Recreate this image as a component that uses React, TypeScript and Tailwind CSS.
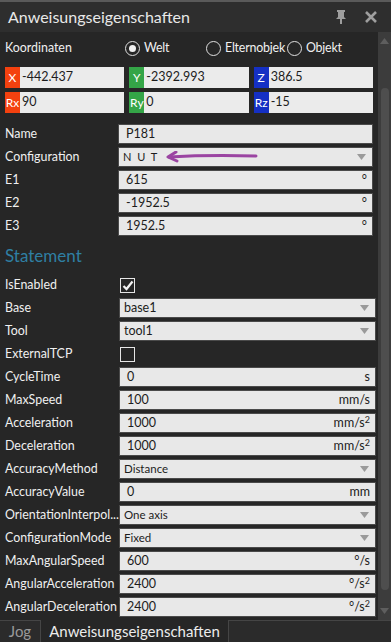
import React from 'react';

const font = { fontFamily: 'Lato, "Noto Sans", sans-serif' };

const Arrow = () => (
  <svg width="9" height="6" viewBox="0 0 9 6" className="shrink-0">
    <path d="M0 0 H9 L4.5 6 Z" fill="#9a9a9a" />
  </svg>
);

type Row = {
  label: string;
  kind: 'text' | 'select' | 'check';
  value?: string;
  unit?: React.ReactNode;
  checked?: boolean;
  small?: boolean;
};

const sq = <span className="text-[9px] inline-block -translate-y-[4px]">2</span>;

const statementRows: Row[] = [
  { label: 'IsEnabled', kind: 'check', checked: true },
  { label: 'Base', kind: 'select', value: 'base1' },
  { label: 'Tool', kind: 'select', value: 'tool1' },
  { label: 'ExternalTCP', kind: 'check', checked: false },
  { label: 'CycleTime', kind: 'text', value: '0', unit: 's' },
  { label: 'MaxSpeed', kind: 'text', value: '100', unit: 'mm/s' },
  { label: 'Acceleration', kind: 'text', value: '1000', unit: <>mm/s{sq}</> },
  { label: 'Deceleration', kind: 'text', value: '1000', unit: <>mm/s{sq}</> },
  { label: 'AccuracyMethod', kind: 'select', value: 'Distance', small: true },
  { label: 'AccuracyValue', kind: 'text', value: '0', unit: 'mm' },
  { label: 'OrientationInterpol...', kind: 'select', value: 'One axis', small: true },
  { label: 'ConfigurationMode', kind: 'select', value: 'Fixed', small: true },
  { label: 'MaxAngularSpeed', kind: 'text', value: '600', unit: '°/s' },
  { label: 'AngularAcceleration', kind: 'text', value: '2400', unit: <>°/s{sq}</> },
  { label: 'AngularDeceleration', kind: 'text', value: '2400', unit: <>°/s{sq}</> },
];

const Field: React.FC<{ row: Row }> = ({ row }) => {
  if (row.kind === 'check') {
    return (
      <div className="h-[20px] flex items-center pl-[1px]">
        <div className="w-[15px] h-[15px] border border-[#e6e6e6] bg-[#262626] flex items-center justify-center">
          {row.checked && (
            <svg width="12" height="11" viewBox="0 0 12 11">
              <path d="M1.5 6 L4.5 9 L10.5 1.5" stroke="#f2f2f2" strokeWidth="2.2" fill="none" />
            </svg>
          )}
        </div>
      </div>
    );
  }
  return (
    <div className="h-[20px] bg-[#e8e8e8] border border-[#4a4a4a] flex items-center text-[#1c1c1c]">
      <span className={`flex-1 ${row.kind === 'select' ? 'pl-[4px]' : 'pl-[7px]'} ${row.small ? 'text-[11.5px]' : 'text-[12.5px]'}`}>
        {row.value}
      </span>
      {row.kind === 'select' ? (
        <span className="pr-[6px] flex items-center"><Arrow /></span>
      ) : (
        <span className="pr-[5px] text-[12.5px] whitespace-nowrap">{row.unit}</span>
      )}
    </div>
  );
};

const Coord: React.FC<{ label: string; value: string; color: string }> = ({ label, value, color }) => (
  <div className="h-[21px] flex bg-[#ebebeb] text-[12.5px]">
    <div className={`w-[15px] flex items-center justify-center text-white text-[12px] ${color}`}>{label}</div>
    <div className="flex-1 flex items-center pl-[2px] text-[#1c1c1c]">{value}</div>
  </div>
);

const Radio: React.FC<{ on?: boolean; label: string }> = ({ on, label }) => (
  <div className="flex items-center gap-[4px]">
    <div className="w-[15px] h-[15px] shrink-0 rounded-full border border-[#e0e0e0] flex items-center justify-center">
      {on && <div className="w-[7px] h-[7px] rounded-full bg-[#f0f0f0]" />}
    </div>
    <span className="whitespace-nowrap tracking-[-0.2px]">{label}</span>
  </div>
);

export default function App() {
  return (
    <div className="w-[391px] h-[642px] bg-[#262626] text-[#f0f0f0] flex flex-col overflow-hidden" style={font}>
      <div className="h-[2px] bg-[#5a5a5a]" />
      <div className="h-[30px] bg-[#2e2e2e] flex items-center pl-[8px] pr-[14px]">
        <span className="flex-1 text-[16px] text-[#e8e8e8]">Anweisungseigenschaften</span>
        <svg width="12" height="14" viewBox="0 0 12 14" className="mr-[18px]">
          <path d="M2 0 H10 V2 H9 V7 L11 9 H7 V14 H5 V9 H1 L3 7 V2 H2 Z" fill="#9e9e9e" />
        </svg>
        <svg width="12" height="12" viewBox="0 0 12 12">
          <path d="M1 1 L11 11 M11 1 L1 11" stroke="#9e9e9e" strokeWidth="2.6" />
        </svg>
      </div>
      <div className="flex-1 flex min-h-0">
        <div className="flex-1 pl-[5px] pr-[5px] pt-[8px] text-[12.4px]">
          <div className="flex items-center h-[17px]">
            <span className="w-[120px]">Koordinaten</span>
            <div className="w-[81px]"><Radio on label="Welt" /></div>
            <div className="w-[81px]"><Radio label="Elternobjek" /></div>
            <Radio label="Objekt" />
          </div>
          <div className="grid grid-cols-3 gap-x-[5px] gap-y-[4px] mt-[10px]">
            <Coord label="X" value="-442.437" color="bg-[#f4410f]" />
            <Coord label="Y" value="-2392.993" color="bg-[#34a547]" />
            <Coord label="Z" value="386.5" color="bg-[#1530c4]" />
            <Coord label="Rx" value="90" color="bg-[#f4410f]" />
            <Coord label="Ry" value="0" color="bg-[#34a547]" />
            <Coord label="Rz" value="-15" color="bg-[#1530c4]" />
          </div>
          <div className="grid grid-cols-[113px_1fr] gap-y-[3px] mt-[11px]">
            <span className="h-[20px] flex items-center">Name</span>
            <Field row={{ label: 'Name', kind: 'text', value: 'P181' }} />
            <span className="h-[20px] flex items-center">Configuration</span>
            <div className="h-[20px] bg-[#e8e8e8] border border-[#4a4a4a] flex items-center text-[#1c1c1c]">
              <span className="pl-[4px] text-[11px] tracking-[1.5px]">N U T</span>
              <svg width="92" height="12" viewBox="0 0 92 12" className="ml-[7px]">
                <path d="M3 6 C20 5 55 4 90 5" stroke="#9b45a2" strokeWidth="3" fill="none" strokeLinecap="round" />
                <path d="M10 1 L2 6 L11 10" stroke="#9b45a2" strokeWidth="3" fill="none" strokeLinecap="round" strokeLinejoin="round" />
              </svg>
              <span className="flex-1" />
              <span className="pr-[6px] flex items-center"><Arrow /></span>
            </div>
            <span className="h-[20px] flex items-center">E1</span>
            <Field row={{ label: 'E1', kind: 'text', value: '615', unit: '°' }} />
            <span className="h-[20px] flex items-center">E2</span>
            <Field row={{ label: 'E2', kind: 'text', value: '-1952.5', unit: '°' }} />
            <span className="h-[20px] flex items-center">E3</span>
            <Field row={{ label: 'E3', kind: 'text', value: '1952.5', unit: '°' }} />
          </div>
          <div className="h-[39px] flex items-center text-[17px] text-[#2f7fa3]">Statement</div>
          <div className="grid grid-cols-[114px_1fr] gap-y-[3px] -mr-[3px]">
            {statementRows.map((r) => (
              <React.Fragment key={r.label}>
                <span className="h-[20px] flex items-center whitespace-nowrap">{r.label}</span>
                <Field row={r} />
              </React.Fragment>
            ))}
          </div>
        </div>
        <div className="w-[13px] bg-[#3c3c3c] flex flex-col items-center">
          <svg width="9" height="6" viewBox="0 0 9 6" className="mt-[6px]">
            <path d="M0 6 H9 L4.5 0 Z" fill="#5e5e5e" />
          </svg>
          <div className="w-[8px] bg-[#4e4e4e] rounded-[4px] mt-[44px] flex-1 mb-[18px]" />
          <svg width="9" height="6" viewBox="0 0 9 6" className="mb-[6px]">
            <path d="M0 0 H9 L4.5 6 Z" fill="#5e5e5e" />
          </svg>
        </div>
      </div>
      <div className="h-[22px] flex bg-[#2b2b2b] text-[15px]">
        <div className="w-[41px] border-t border-r border-[#454545] flex items-center justify-center text-[#9a9a9a]">Jog</div>
        <div className="w-[187px] bg-[#262626] flex items-center justify-center text-[#ececec]">Anweisungseigenschaften</div>
        <div className="flex-1 border-t border-l border-[#454545]" />
      </div>
    </div>
  );
}
